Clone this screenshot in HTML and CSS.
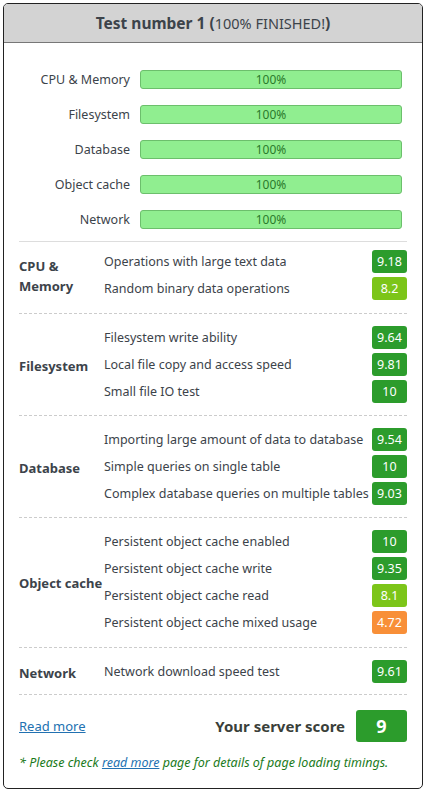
FILE: index.html
```html
<!DOCTYPE html>
<html>
<head>
<meta charset="utf-8">
<link rel="stylesheet" href="styles.css">
</head>
<body>
<div class="panel">
  <div class="header"><b>Test number 1 (</b>100% FINISHED!<b>)</b></div>
  <div class="content">
    <div class="bars">
      <div class="bar-row"><span class="bar-label">CPU &amp; Memory</span><div class="bar">100%</div></div>
      <div class="bar-row"><span class="bar-label">Filesystem</span><div class="bar">100%</div></div>
      <div class="bar-row"><span class="bar-label">Database</span><div class="bar">100%</div></div>
      <div class="bar-row"><span class="bar-label">Object cache</span><div class="bar">100%</div></div>
      <div class="bar-row"><span class="bar-label">Network</span><div class="bar">100%</div></div>
    </div>
    <div class="section first">
      <div class="cat r2">CPU &amp;<br>Memory</div>
      <div class="test">Operations with large text data</div><div class="badge g">9.18</div>
      <div class="test">Random binary data operations</div><div class="badge l">8.2</div>
    </div>
    <div class="section">
      <div class="cat r3">Filesystem</div>
      <div class="test">Filesystem write ability</div><div class="badge g">9.64</div>
      <div class="test">Local file copy and access speed</div><div class="badge g">9.81</div>
      <div class="test">Small file IO test</div><div class="badge g">10</div>
    </div>
    <div class="section">
      <div class="cat r3">Database</div>
      <div class="test">Importing large amount of data to database</div><div class="badge g">9.54</div>
      <div class="test">Simple queries on single table</div><div class="badge g">10</div>
      <div class="test">Complex database queries on multiple tables</div><div class="badge g">9.03</div>
    </div>
    <div class="section obj">
      <div class="cat r4">Object cache</div>
      <div class="test">Persistent object cache enabled</div><div class="badge g">10</div>
      <div class="test">Persistent object cache write</div><div class="badge g">9.35</div>
      <div class="test">Persistent object cache read</div><div class="badge l">8.1</div>
      <div class="test">Persistent object cache mixed usage</div><div class="badge o">4.72</div>
    </div>
    <div class="section last">
      <div class="cat r1">Network</div>
      <div class="test">Network download speed test</div><div class="badge g">9.61</div>
    </div>
    <div class="footer">
      <a href="#" class="read">Read more</a>
      <div class="score"><span class="score-label">Your server score</span><span class="score-badge">9</span></div>
    </div>
    <p class="note">* Please check <a href="#">read more</a> page for details of page loading timings.</p>
  </div>
</div>
</body>
</html>
```
FILE: styles.css
```css
html, body { margin: 0; padding: 0; background: #fff; }
body {
  padding: 3px;
  font-family: "Noto Sans", "Open Sans", sans-serif;
  font-size: 12.5px;
  color: #3c434a;
}
.panel {
  box-sizing: border-box;
  width: 420px;
  height: 786px;
  border: 1px solid #222;
  border-radius: 5px;
  overflow: hidden;
}
.header {
  background: #d3d3d3;
  border-bottom: 1px solid #777;
  height: 38px;
  line-height: 38px;
  text-align: center;
  font-size: 14.5px;
  color: #3c434a;
}
.header b { font-weight: 700; font-size: 15.5px; }
.content { padding: 0 15px; }
.bars {
  padding-top: 27px;
  padding-bottom: 12px;
  display: flex;
  flex-direction: column;
  gap: 16px;
  border-bottom: 1px solid #ddd;
}
.bar-row { display: flex; align-items: center; gap: 10px; }
.bar-label { width: 111px; text-align: right; }
.bar {
  flex: 1;
  margin-right: 5px;
  height: 19px;
  box-sizing: border-box;
  background: #90ee90;
  border: 1px solid #6cbf6c;
  border-radius: 3px;
  text-align: center;
  font-size: 12px;
  line-height: 17px;
  color: #2b7a2b;
}
.section {
  display: grid;
  grid-template-columns: 85px 1fr 35px;
  row-gap: 4px;
  align-items: center;
  padding: 12px 0 12px;
  border-bottom: 1px dashed #ccc;
}
.section.first { padding: 8px 0 13px; }
.section.obj { padding: 12px 0 13px; }
.section.last { padding: 12px 0 11px; }
.cat {
  font-weight: 700;
  font-size: 13px;
  grid-column: 1;
  align-self: center;
  line-height: 20px;
  padding-top: 2px;
  color: #3c434a;
}
.r1 { grid-row: 1 / span 1; }
.r2 { grid-row: 1 / span 2; }
.r3 { grid-row: 1 / span 3; }
.r4 { grid-row: 1 / span 4; }
.test { grid-column: 2; white-space: nowrap; }
.badge {
  grid-column: 3;
  height: 23px;
  border-radius: 3px;
  color: #fff;
  text-align: center;
  line-height: 23px;
  font-size: 12.5px;
}
.g { background: #2c9c2c; }
.l { background: #7cc519; }
.o { background: #f88f38; }
.footer {
  display: flex;
  justify-content: space-between;
  align-items: center;
  padding-top: 15px;
}
.read { color: #2271b1; text-decoration: underline; font-size: 13px; }
.score { display: flex; align-items: center; gap: 11px; }
.score-label { font-weight: 700; font-size: 15px; color: #3a3f3a; }
.score-badge {
  width: 51px;
  height: 32px;
  background: #2c9c2c;
  border-radius: 3px;
  color: #fff;
  font-weight: 700;
  font-size: 18px;
  line-height: 32px;
  text-align: center;
}
.note {
  margin: 12px 0 0;
  font-style: italic;
  font-size: 12.5px;
  color: #1a7a1a;
}
.note a { color: #2271b1; }
```
